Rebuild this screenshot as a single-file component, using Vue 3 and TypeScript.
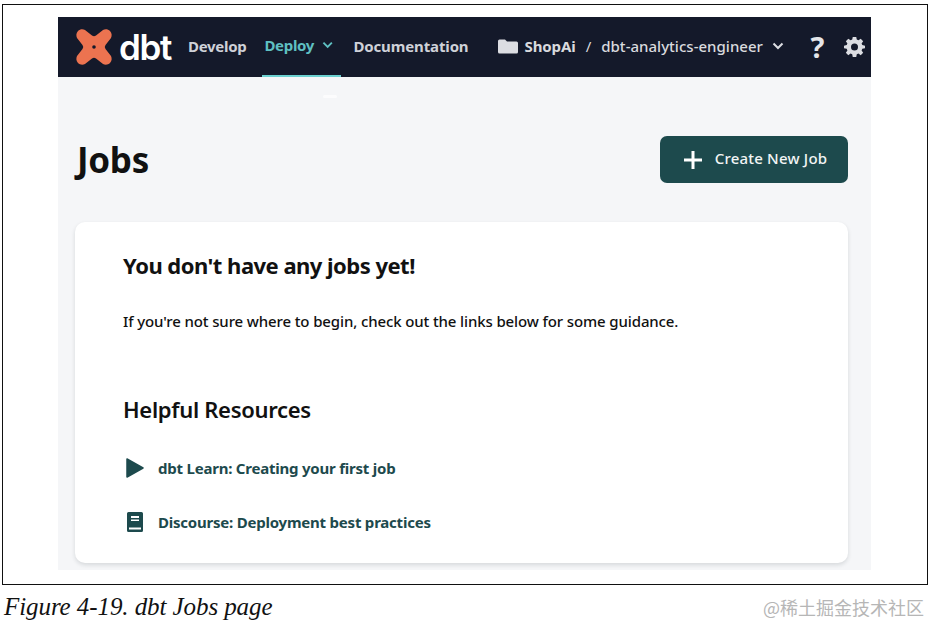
<script setup lang="ts">
const links = [
  { id: 'play', label: 'dbt Learn: Creating your first job' },
  { id: 'book', label: 'Discourse: Deployment best practices' },
]
</script>

<template>
  <div class="page">
    <div class="frame">
      <div class="shot">
        <header class="nav">
          <div class="brand">
            <svg class="logo" viewBox="0 0 38 38" width="38" height="38">
              <path fill="#ec7350" d="M3 3C5 1 8 1 10 2L17 7.500Q19 9 21 7.500L28 2C30 1 33 1 35 3C37 5 37 8 36 10L30.500 17Q29 19 30.500 21L36 28C37 30 37 33 35 35C33 37 30 37 28 36L21 30.500Q19 29 17 30.500L10 36C8 37 5 37 3 35C1 33 1 30 2 28L7.500 21Q9 19 7.500 17L2 10C1 8 1 5 3 3z"/>
              <circle cx="19" cy="19" r="1.800" fill="#14192a"/>
            </svg>
            <span class="word">dbt</span>
          </div>
          <nav class="menu">
            <a class="item">Develop</a>
            <a class="item active">
              Deploy
              <svg class="chev" viewBox="0 0 12 8" width="12" height="8"><path d="M1.500 1.500 6 6l4.500-4.500" fill="none" stroke="currentColor" stroke-width="2"/></svg>
            </a>
            <a class="item doc">Documentation</a>
          </nav>
          <div class="project">
            <svg viewBox="0 0 20 15" width="20" height="15"><path fill="#dcdde2" d="M0 2a1.500 1.500 0 0 1 1.500-1.500h5.500l2 2h9.500A1.500 1.500 0 0 1 20 4v9a1.500 1.500 0 0 1-1.500 1.500h-17A1.500 1.500 0 0 1 0 13z"/></svg>
            <span class="shop">ShopAi</span>
            <span class="slash">/</span>
            <span class="repo">dbt-analytics-engineer</span>
            <svg viewBox="0 0 12 8" width="12" height="8"><path d="M1.500 1.500 6 6l4.500-4.500" fill="none" stroke="#dcdde2" stroke-width="2"/></svg>
          </div>
          <div class="tools">
            <span class="q">?</span>
            <svg viewBox="0 0 24 24" width="21" height="21"><path fill="#dcdde2" fill-rule="evenodd" d="M10 1h4l.6 3.100 1.900.8 2.600-1.800 2.800 2.800-1.800 2.600.8 1.900L24 11v3l-3.100.6-.8 1.900 1.800 2.600-2.800 2.800-2.600-1.800-1.900.8L14 24h-4l-.6-3.100-1.900-.8-2.600 1.800-2.800-2.800 1.800-2.600-.8-1.900L0 14v-3l3.100-.6.8-1.900-1.800-2.600 2.800-2.800 2.600 1.800 1.900-.8zM12 8.500a4 4 0 1 0 0 8 4 4 0 0 0 0-8z"/></svg>
          </div>
        </header>
        <main class="body">
          <i class="speck"></i>
          <div class="head">
            <h1>Jobs</h1>
            <button class="create">
              <svg viewBox="0 0 18 18" width="18" height="18"><path d="M9 0v18M0 9h18" stroke="#fff" stroke-width="3"/></svg>
              <span>Create New Job</span>
            </button>
          </div>
          <section class="card">
            <h2>You don't have any jobs yet!</h2>
            <p>If you're not sure where to begin, check out the links below for some guidance.</p>
            <h3>Helpful Resources</h3>
            <ul>
              <li v-for="l in links" :key="l.id">
                <svg v-if="l.id === 'play'" viewBox="0 0 18 20" width="18" height="20"><path d="M1 1 17 10 1 19z" fill="#1d4a4d" stroke="#1d4a4d" stroke-width="1.500" stroke-linejoin="round"/></svg>
                <svg v-else viewBox="0 0 18 20" width="18" height="20"><path fill="#1d4a4d" fill-rule="evenodd" d="M2.500 0h13A1.500 1.500 0 0 1 17 1.500v17a1.500 1.500 0 0 1-1.500 1.500h-13A1.500 1.500 0 0 1 1 18.500v-17A1.500 1.500 0 0 1 2.500 0zM5 4v2h8V4zm0 3.500v1.500h8V7.500zM3 15.500V17.500h12v-2z"/></svg>
                <a>{{ l.label }}</a>
              </li>
            </ul>
          </section>
        </main>
      </div>
    </div>
    <footer class="foot">
      <span class="caption">Figure 4-19. dbt Jobs page</span>
      <span class="mark">@稀土掘金技术社区</span>
    </footer>
  </div>
</template>

<style>
html, body { margin: 0; background: #fff; }
</style>

<style scoped>
.page {
  width: 930px;
  height: 624px;
  overflow: hidden;
  box-sizing: border-box;
  padding-top: 4px;
  font-family: "Noto Sans", sans-serif;
}
.frame {
  margin-left: 2px;
  width: 926px;
  height: 581px;
  box-sizing: border-box;
  border: 1px solid #111;
  padding: 12px 0 0 55px;
}
.shot { width: 813px; height: 553px; background: #f5f6f8; }
.nav {
  height: 60px;
  background: #14192a;
  display: flex;
  align-items: center;
  box-sizing: border-box;
  padding-left: 17px;
  overflow: hidden;
}
.brand { display: flex; align-items: center; gap: 6px; width: 113px; flex: none; }
.word {
  font-family: Inter, sans-serif;
  font-size: 35px;
  font-weight: 600;
  letter-spacing: -1.300px;
  color: #fff;
  line-height: 38px;
}
.menu { display: flex; height: 60px; align-items: center; gap: 18px; flex: none; margin-top: -2px; }
.item {
  font-size: 15px;
  font-weight: 700;
  color: #cfd1d8;
  letter-spacing: -.3px;
  line-height: 60px;
  height: 60px;
  box-sizing: border-box;
}
.item.doc { letter-spacing: -.13px; margin-left: 2px; }
.item.active {
  color: #5fc0c2;
  display: flex;
  align-items: center;
  gap: 8px;
  margin: 2px -8px 0 -2px;
  padding: 0 8px 4px 2px;
  width: 79px;
  position: relative;
  box-shadow: inset 0 -2px 0 #6bd0d0;
}
.project {
  margin-left: 29px;
  display: flex;
  align-items: center;
  color: #d9dade;
  font-size: 15px;
  flex: none;
  margin-top: -2px;
}
.shop { font-weight: 700; margin-left: 7px; letter-spacing: -.1px; }
.slash { margin: 0 10px; }
.repo { font-weight: 500; letter-spacing: .02px; margin-right: 9px; }
.tools { margin-left: 25px; display: flex; align-items: center; gap: 18px; flex: none; margin-top: -2px; }
.q { color: #e4e5e9; font-size: 29px; font-weight: 700; line-height: 1; width: 17px; text-align: center; }
.body { padding: 0 23px 0 17px; position: relative; }
.speck {
  position: absolute;
  left: 265px;
  top: 18px;
  width: 14px;
  height: 3px;
  border-radius: 2px;
  background: #fff;
  opacity: .7;
}
.head {
  height: 145px;
  display: flex;
  justify-content: space-between;
  align-items: flex-start;
}
h1 {
  margin: 61px 0 0 2px;
  font-size: 35px;
  line-height: 44px;
  font-weight: 700;
  color: #111;
  letter-spacing: -.3px;
}
.create {
  margin-top: 59px;
  width: 188px;
  height: 47px;
  background: #1d4a4d;
  border: 0;
  border-radius: 7px;
  color: #f2f5f5;
  font: 500 15px "Noto Sans", sans-serif;
  letter-spacing: .2px;
  display: flex;
  align-items: center;
  justify-content: center;
  gap: 13px;
  padding: 0 0 3px 3px;
}
.create svg { margin-top: 3px; }
.card {
  height: 341px;
  background: #fff;
  border-radius: 10px;
  box-shadow: 0 2px 4px rgba(30, 40, 50, .14);
  box-sizing: border-box;
  padding: 26px 48px 0;
  color: #111;
}
h2 {
  margin: 0;
  font-size: 22px;
  line-height: 34px;
  font-weight: 700;
  letter-spacing: -.52px;
}
p {
  margin: 28px 0 0;
  font-size: 15px;
  line-height: 22px;
  font-weight: 500;
  letter-spacing: -.125px;
}
h3 {
  margin: 61px 0 0;
  font-size: 22px;
  line-height: 32px;
  font-weight: 600;
  letter-spacing: -.3px;
}
ul { list-style: none; margin: 23px 0 0; padding: 0; }
li {
  display: flex;
  align-items: center;
  gap: 14px;
  margin-left: 3px;
  color: #1d4a4d;
  font-size: 15px;
  font-weight: 700;
  letter-spacing: -.22px;
}
li:first-child { height: 40px; }
li + li { height: 68px; }
.foot {
  display: flex;
  justify-content: space-between;
  align-items: center;
  padding: 8px 6px 0 4px;
}
.caption {
  font: italic 25px "Liberation Serif", serif;
  letter-spacing: -.08px;
  color: #111;
}
.mark {
  font: 18px "Noto Sans CJK SC", sans-serif;
  color: #b6b6b6;
}
</style>
